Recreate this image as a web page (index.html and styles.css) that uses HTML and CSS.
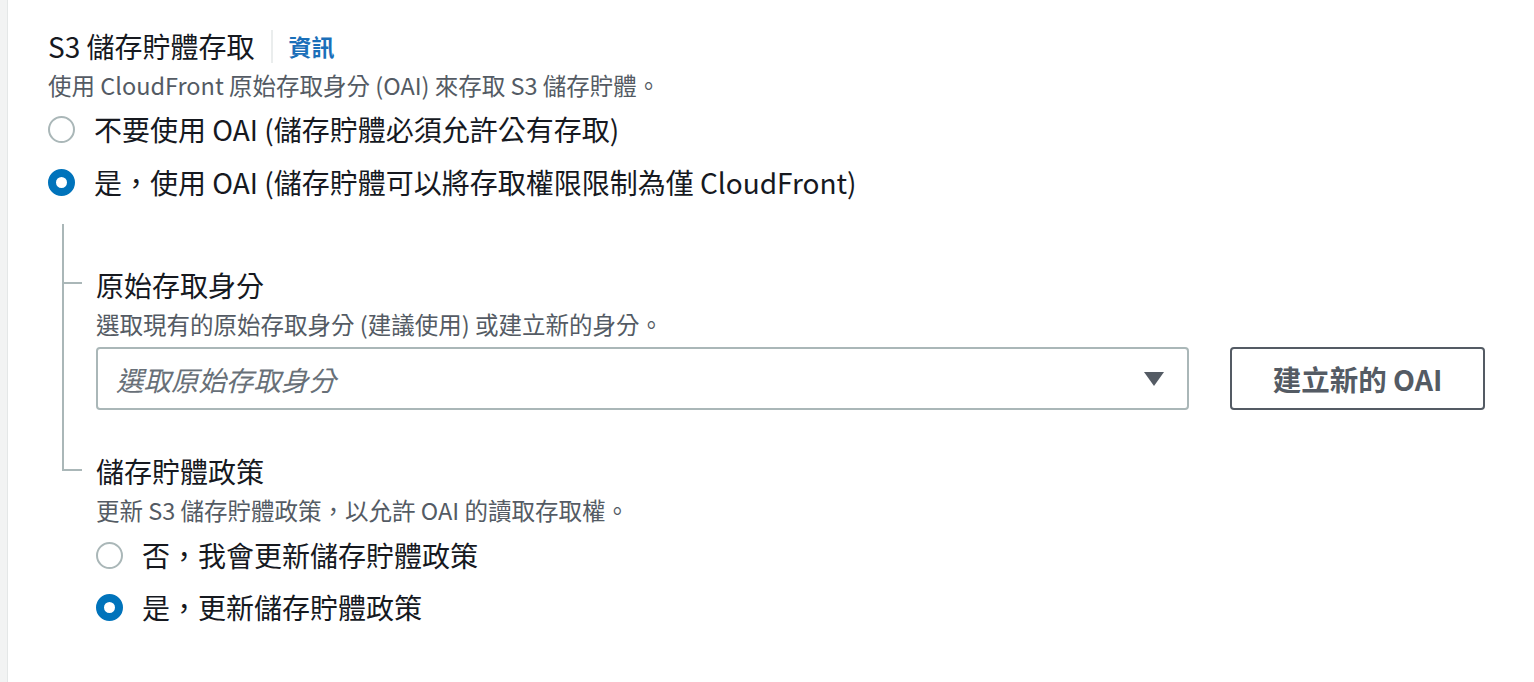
FILE: index.html
```html
<!DOCTYPE html>
<html lang="zh-Hant">
<head>
<meta charset="utf-8">
<title>S3 儲存貯體存取</title>
<link rel="stylesheet" href="styles.css">
</head>
<body>
<div class="page">
  <div class="side-strip"></div>
  <main class="content">
    <div class="field-header">
      <span class="field-label">S3 儲存貯體存取</span>
      <span class="header-sep"></span>
      <a class="info-link" href="#">資訊</a>
    </div>
    <div class="field-desc">使用 CloudFront 原始存取身分 (OAI) 來存取 S3 儲存貯體。</div>
    <div class="radio-group top-radios">
      <label class="radio-row"><span class="radio"></span><span class="radio-text">不要使用 OAI (儲存貯體必須允許公有存取)</span></label>
      <label class="radio-row"><span class="radio checked"></span><span class="radio-text">是，使用 OAI (儲存貯體可以將存取權限限制為僅 CloudFront)</span></label>
    </div>

    <div class="tree">
      <div class="tree-item first">
        <div class="rail"><div class="branch"></div></div>
        <div class="tree-body">
          <div class="field-label">原始存取身分</div>
          <div class="field-desc">選取現有的原始存取身分 (建議使用) 或建立新的身分。</div>
          <div class="select-row">
            <div class="select">
              <span class="placeholder">選取原始存取身分</span>
              <span class="caret"></span>
            </div>
            <button class="btn" type="button">建立新的 OAI</button>
          </div>
        </div>
      </div>
      <div class="tree-item last">
        <div class="rail"><div class="branch"></div></div>
        <div class="tree-body">
          <div class="field-label">儲存貯體政策</div>
          <div class="field-desc">更新 S3 儲存貯體政策，以允許 OAI 的讀取存取權。</div>
          <div class="radio-group policy-radios">
            <label class="radio-row"><span class="radio"></span><span class="radio-text">否，我會更新儲存貯體政策</span></label>
            <label class="radio-row"><span class="radio checked"></span><span class="radio-text">是，更新儲存貯體政策</span></label>
          </div>
        </div>
      </div>
    </div>
  </main>
</div>
</body>
</html>
```

FILE: styles.css
```css
* { box-sizing: border-box; }

html, body {
  margin: 0;
  padding: 0;
  background: #ffffff;
}

body {
  font-family: "Noto Sans CJK TC", "Noto Sans", sans-serif;
  color: #16191f;
}

.page {
  display: flex;
  min-height: 682px;
}

.side-strip {
  width: 8px;
  flex: 0 0 8px;
  background: #f2f3f3;
  border-right: 1px solid #e4e7e7;
}

.content {
  flex: 1;
  padding: 28px 49px 0 40px;
}

.field-header {
  display: flex;
  align-items: center;
  height: 36px;
}

.field-label {
  font-size: 28px;
  line-height: 36px;
  color: #16191f;
}

.header-sep {
  width: 2px;
  height: 33px;
  background: #eaeded;
  margin: 0 16px;
}

.info-link {
  font-size: 23px;
  font-weight: 700;
  color: #1a6fb9;
  text-decoration: none;
  line-height: 36px;
}

.field-desc {
  font-size: 23.5px;
  line-height: 32px;
  color: #545b64;
  margin-top: 5px;
}

.radio-group {
  display: flex;
  flex-direction: column;
}

.top-radios {
  margin-top: 10px;
  gap: 17px;
}

.policy-radios {
  margin-top: 11px;
  gap: 16px;
}

.radio-row {
  display: flex;
  align-items: center;
  height: 36px;
  gap: 19px;
}

.radio {
  width: 27px;
  height: 27px;
  border-radius: 50%;
  border: 2px solid #aab7b8;
  background: #fff;
  flex: 0 0 27px;
}

.radio.checked {
  border: 8.5px solid #0073bb;
}

.radio-text {
  font-size: 28px;
  line-height: 36px;
  color: #16191f;
}

.tree {
  margin-top: 24px;
  margin-left: 14px;
  display: flex;
  flex-direction: column;
}

.tree-item {
  display: flex;
}

.rail {
  width: 34px;
  flex: 0 0 34px;
}

.tree-item.first .rail {
  border-left: 2px solid #aab7b8;
}

.tree-item.first .branch {
  width: 18px;
  height: 60px;
  border-bottom: 2px solid #aab7b8;
}

.tree-item.last .branch {
  width: 20px;
  height: 18px;
  border-left: 2px solid #aab7b8;
  border-bottom: 2px solid #aab7b8;
}

.tree-body {
  flex: 1;
  min-width: 0;
}

.tree-item.first .tree-body {
  padding-top: 43px;
  padding-bottom: 43px;
}

.select-row {
  display: flex;
  gap: 41px;
  margin-top: 7px;
}

.select {
  flex: 1;
  height: 63px;
  border: 2px solid #aab7b8;
  border-radius: 4px;
  display: flex;
  align-items: center;
  justify-content: space-between;
  padding: 0 23px 0 18px;
}

.placeholder {
  font-size: 27.5px;
  font-style: italic;
  color: #687078;
}

.caret {
  width: 0;
  height: 0;
  border-left: 10px solid transparent;
  border-right: 10px solid transparent;
  border-top: 14px solid #545b64;
}

.btn {
  width: 255px;
  height: 63px;
  border: 2px solid #545b64;
  border-radius: 4px;
  background: #fff;
  font-family: inherit;
  font-size: 28.5px;
  font-weight: 700;
  color: #545b64;
  padding: 0;
}
```
